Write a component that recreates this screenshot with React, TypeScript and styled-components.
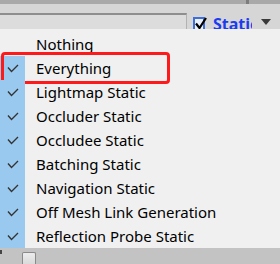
import React from "react";
import styled, { createGlobalStyle } from "styled-components";

const Global = createGlobalStyle`
  html, body { margin: 0; padding: 0; overflow: hidden; background: #f0f0f0; }
  * { box-sizing: border-box; }
`;

const Page = styled.div`
  width: 280px;
  height: 264px;
  display: flex;
  flex-direction: column;
  overflow: hidden;
  font-family: "Noto Sans", "Open Sans", sans-serif;
`;

const TopStrip = styled.div`
  height: 4px;
  background: #a9a9a9;
  display: flex;
  justify-content: flex-end;
  padding-right: 31px;
`;

const Tick = styled.div`
  width: 3px;
  height: 4px;
  background: #7d7d7d;
`;

const Toolbar = styled.div`
  height: 25px;
  background: #d6d6d6;
  display: flex;
  align-items: flex-end;
  overflow: hidden;
`;

const SearchField = styled.div`
  width: 187px;
  height: 16px;
  background: #dcdcdc;
  border-top: 2px solid #8e8e8e;
  border-right: 1px solid #b2b2b2;
`;

const CheckBox = styled.div`
  margin-left: 6px;
  width: 12px;
  height: 12px;
  border: 2px solid #3d6fd6;
  border-bottom: none;
  background: #e9effb;
  position: relative;
`;

const BoxCheck = styled.svg`
  position: absolute;
  left: -1px;
  top: -2px;
`;

const StaticLabel = styled.span`
  margin-left: 8px;
  width: 39px;
  flex-shrink: 0;
  overflow: hidden;
  white-space: nowrap;
  font-family: "Noto Sans", sans-serif;
  font-weight: bold;
  font-size: 16px;
  line-height: 16px;
  color: #1b3cf0;
  height: 13px;
  align-self: flex-end;
`;

const Arrow = styled.div`
  margin-left: 9px;
  margin-bottom: 4px;
  width: 0;
  height: 0;
  border-left: 5px solid transparent;
  border-right: 5px solid transparent;
  border-top: 6px solid #3a3a3a;
`;

const Menu = styled.div`
  flex: 1;
  background: #f0f0f0;
  padding-top: 3px;
  display: flex;
  flex-direction: column;
`;

const Row = styled.div`
  height: 24px;
  display: flex;
  align-items: center;
  position: relative;
`;

const Gutter = styled.div<{ $checked: boolean }>`
  width: 25px;
  height: 24px;
  background: ${(p) => (p.$checked ? "#99c9ef" : "transparent")};
  display: flex;
  align-items: center;
  justify-content: center;
  flex-shrink: 0;
`;

const Label = styled.span`
  margin-left: 11px;
  font-size: 15px;
  color: #000;
  white-space: nowrap;
  line-height: 24px;
`;

const Highlight = styled.div`
  position: absolute;
  left: 1px;
  top: -4px;
  bottom: -4px;
  width: 169px;
  border: 3px solid #fe1a1a;
  border-radius: 4px;
  pointer-events: none;
`;

const BottomBar = styled.div`
  height: 16px;
  background: #c3c3c3;
  display: flex;
  align-items: flex-end;
`;

const EdgeMark = styled.div`
  width: 2px;
  height: 4px;
  margin-bottom: 10px;
  background: #444;
`;

const Thumb = styled.div`
  margin-left: 20px;
  width: 14px;
  height: 12px;
  background: linear-gradient(#ececec, #dadada);
  border: 1px solid #8a8a8a;
  border-bottom: none;
  border-radius: 2px 2px 0 0;
`;

const Check = () => (
  <svg width="12" height="9" viewBox="0 0 12 9">
    <polyline points="1,3.5 4.5,7.5 11,1" fill="none" stroke="#333" strokeWidth="1.4" />
  </svg>
);

const items = [
  { label: "Nothing", checked: false },
  { label: "Everything", checked: true, highlight: true },
  { label: "Lightmap Static", checked: true },
  { label: "Occluder Static", checked: true },
  { label: "Occludee Static", checked: true },
  { label: "Batching Static", checked: true },
  { label: "Navigation Static", checked: true },
  { label: "Off Mesh Link Generation", checked: true },
  { label: "Reflection Probe Static", checked: true },
];

export default function App() {
  return (
    <Page>
      <Global />
      <TopStrip>
        <Tick />
      </TopStrip>
      <Toolbar>
        <SearchField />
        <CheckBox>
          <BoxCheck width="13" height="13" viewBox="0 0 13 13">
            <polyline points="2,6.5 5.5,11 12,1" fill="none" stroke="#000" strokeWidth="2.2" />
          </BoxCheck>
        </CheckBox>
        <StaticLabel>Static</StaticLabel>
        <Arrow />
      </Toolbar>
      <Menu>
        {items.map((it) => (
          <Row key={it.label}>
            <Gutter $checked={it.checked}>{it.checked && <Check />}</Gutter>
            <Label>{it.label}</Label>
            {it.highlight && <Highlight />}
          </Row>
        ))}
      </Menu>
      <BottomBar>
        <EdgeMark />
        <Thumb />
      </BottomBar>
    </Page>
  );
}
